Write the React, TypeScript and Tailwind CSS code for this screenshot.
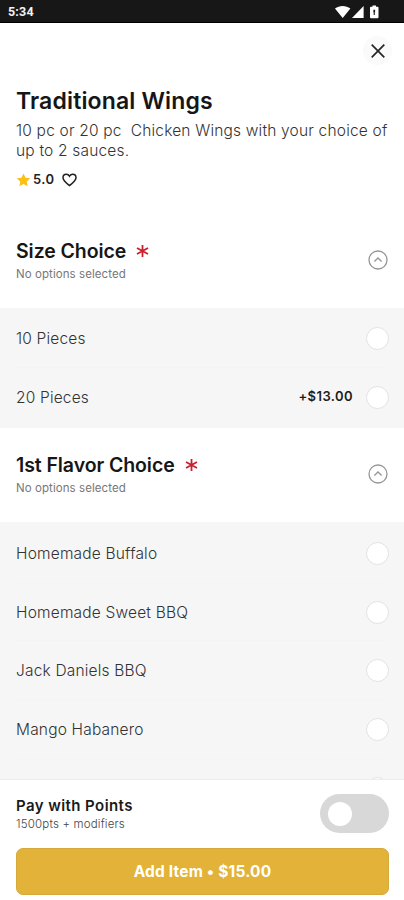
interface Option {
  name: string
  price?: string
}

interface Group {
  title: string
  options: Option[]
}

const sizeGroup: Group = {
  title: 'Size Choice',
  options: [{ name: '10 Pieces' }, { name: '20 Pieces', price: '+$13.00' }],
}

const flavorGroup: Group = {
  title: '1st Flavor Choice',
  options: [
    { name: 'Homemade Buffalo' },
    { name: 'Homemade Sweet BBQ' },
    { name: 'Jack Daniels BBQ' },
    { name: 'Mango Habanero' },
    { name: '' },
  ],
}

function StatusBar() {
  return (
    <div className="flex h-[23px] shrink-0 items-center justify-between border-b border-black bg-[#171717] pl-[8px] pr-[25px]">
      <span className="pt-[3px] text-[12.5px] font-bold leading-none tracking-[0.2px] text-[#f2f2f2] font-['Roboto',sans-serif]">
        5:34
      </span>
      <svg width="44" height="14" viewBox="0 0 44 14" fill="#fff" className="mt-[1px]">
        <path d="M0 3.6C4.2.1 11 .1 15.4 3.6L7.7 13z" />
        <path d="M28.6 1v12H17z" />
        <path d="M35 2.8q0-1 1-1h1.500V.4h3.500v1.400h1.500q1 0 1 1v9.400q0 1-1 1H36q-1 0-1-1z" />
        <path d="M38.4 4.8h1.700v3h-1.700zM38.7 8h1.100v2h-1.100z" fill="#171717" />
      </svg>
    </div>
  )
}

function Asterisk() {
  return (
    <svg width="13" height="14" viewBox="0 0 13 14" stroke="#c8202f" strokeWidth="1.8" fill="none">
      <path d="M6.5 1v12M1 4l11 6M1 10l11-6" />
    </svg>
  )
}

function GroupHeader({ title }: { title: string }) {
  return (
    <div className="flex h-[94px] shrink-0 items-center justify-between bg-white pl-4 pr-[17px]">
      <div className="pb-[1px]">
        <div className="flex items-center gap-[10px]">
          <h2 className="text-[19.5px] font-semibold leading-[24px] tracking-[-0.08px] text-[#161616]">{title}</h2>
          <Asterisk />
        </div>
        <p className="mt-[3px] text-[11.5px] leading-[16px] tracking-[0.07px] text-[#777]">No options selected</p>
      </div>
      <svg width="20" height="20" viewBox="0 0 20 20" fill="none" stroke="#969696" strokeWidth="1.3" className="mr-[-1px] mt-[-2px]">
        <circle cx="10" cy="10" r="9" />
        <path d="M6.4 11.5 10 8l3.6 3.500" />
      </svg>
    </div>
  )
}

function OptionRow({ option }: { option: Option }) {
  return (
    <div className="flex h-[58.7px] shrink-0 items-center border-b border-[#f4f4f4] last:border-transparent">
      <span className="flex-1 pt-[2px] text-[15.5px] font-light leading-5 tracking-[0.18px] text-[#333]">
        {option.name}
      </span>
      {option.price && (
        <span className="mr-[13px] pt-[1px] text-[13px] font-semibold tracking-[0.42px] text-[#1c1c1c]">
          {option.price}
        </span>
      )}
      <span className="mr-[-1px] mt-[1px] size-[23px] rounded-full border border-[#e2e2e2] bg-white" />
    </div>
  )
}

export default function App() {
  return (
    <div className="flex h-[900px] w-[404px] flex-col overflow-hidden bg-white font-['Inter','Liberation_Sans',sans-serif]">
      <StatusBar />

      <div className="flex h-[191px] shrink-0 flex-col px-4">
        <div className="mr-[-4px] mt-[13px] flex size-[29px] items-center justify-center self-end rounded-full bg-[#fafafa]">
          <svg width="14" height="14" viewBox="0 0 14 14" stroke="#262626" strokeWidth="1.7" fill="none">
            <path d="M.7.7l12.6 12.6M13.3.7.7 13.3" />
          </svg>
        </div>
        <h1 className="mt-[22px] text-[23px] font-semibold leading-[28px] tracking-[0.15px] text-[#161616]">
          Traditional Wings
        </h1>
        <p className="mt-[6px] whitespace-pre text-[15.5px] font-light leading-[20px] tracking-[0.19px] text-[#333]">
          {'10 pc or 20 pc  Chicken Wings with your choice of\nup to 2 sauces.'}
        </p>
        <div className="mt-[10px] flex h-[18px] items-center">
          <svg width="15" height="14" viewBox="0 0 24 24" fill="#fbc116">
            <path d="M12 .8l3.5 7.4 8 1-5.9 5.6 1.5 8.1L12 19l-7.1 3.9 1.5-8.1L.5 9.2l8-1z" />
          </svg>
          <span className="ml-[2px] text-[13px] font-semibold tracking-[0.4px] text-[#222]">5.0</span>
          <svg width="15" height="14" viewBox="0 0 15 14" fill="none" stroke="#222" strokeWidth="1.5" className="ml-[8px]">
            <path d="M7.5 12.6C3.8 9.7 1 7.3 1 4.7 1 2.7 2.5 1.3 4.3 1.3c1.3 0 2.500.7 3.2 1.9.7-1.2 1.900-1.900 3.200-1.900C12.5 1.3 14 2.7 14 4.7c0 2.600-2.800 5-6.500 7.900z" />
          </svg>
        </div>
      </div>

      <GroupHeader title={sizeGroup.title} />
      <div className="flex h-[120px] shrink-0 flex-col bg-[#f6f6f6] px-4 pt-[1px]">
        {sizeGroup.options.map((o) => (
          <OptionRow key={o.name} option={o} />
        ))}
      </div>

      <GroupHeader title={flavorGroup.title} />
      <div className="flex h-[257px] shrink-0 flex-col overflow-hidden bg-[#f6f6f6] px-4 pt-[2px]">
        {flavorGroup.options.map((o) => (
          <OptionRow key={o.name} option={o} />
        ))}
      </div>

      <div className="flex flex-1 flex-col border-t border-[#ececec] bg-white px-[15px] pt-[14px]">
        <div className="flex h-[39px] items-center justify-between">
          <div className="pl-[1px]">
            <p className="pt-[1px] text-[15px] font-semibold leading-[20px] tracking-[0.42px] text-[#1a1a1a]">
              Pay with Points
            </p>
            <p className="text-[11.5px] font-light leading-[16px] tracking-[0.18px] text-[#444]">1500pts + modifiers</p>
          </div>
          <div className="flex h-[39px] w-[69px] items-center rounded-full bg-[#d8d8d8] pl-[8px]">
            <span className="size-[24px] rounded-full bg-white" />
          </div>
        </div>
        <button className="ml-[1px] mt-[15px] h-[47px] rounded-[7px] border border-[#d6a93a] bg-[#e2b338] text-[15.5px] font-bold tracking-[0.18px] text-white">
          Add Item • $15.00
        </button>
      </div>
    </div>
  )
}
